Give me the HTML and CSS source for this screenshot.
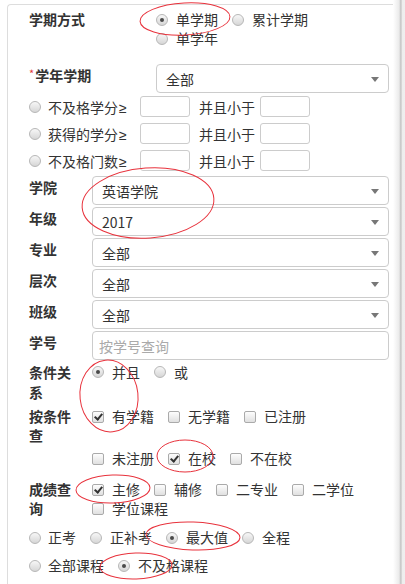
FILE: index.html
```html
<!DOCTYPE html>
<html lang="zh-CN">
<head>
    <meta charset="UTF-8">
    <meta name="viewport" content="width=device-width, initial-scale=1.0">
    <title>成绩查询</title>
    <link rel="stylesheet" href="styles.css">
</head>
<body>
<div class="page">
    <div class="panel">

        <div class="row">
            <div class="lbl wide">学期方式</div>
            <div class="opts first">
                <span class="opt"><i class="rd on"></i>单学期</span>
                <span class="opt"><i class="rd"></i>累计学期</span>
                <span class="opt"><i class="rd"></i>单学年</span>
            </div>
        </div>

        <div class="row term">
            <div class="lbl wide"><span class="req">*</span>学年学期</div>
            <div class="sel"><span>全部</span><i class="caret"></i></div>
        </div>

        <div class="row cr">
            <i class="rd"></i><span class="t">不及格学分<span class="ge">≥</span></span>
            <input type="text" class="num">
            <span class="and">并且小于</span>
            <input type="text" class="num">
        </div>
        <div class="row cr">
            <i class="rd"></i><span class="t">获得的学分<span class="ge">≥</span></span>
            <input type="text" class="num">
            <span class="and">并且小于</span>
            <input type="text" class="num">
        </div>
        <div class="row cr">
            <i class="rd"></i><span class="t">不及格门数<span class="ge">≥</span></span>
            <input type="text" class="num">
            <span class="and">并且小于</span>
            <input type="text" class="num">
        </div>

        <div class="row s">
            <div class="lbl">学院</div>
            <div class="sel"><span>英语学院</span><i class="caret"></i></div>
        </div>
        <div class="row s">
            <div class="lbl">年级</div>
            <div class="sel"><span>2017</span><i class="caret"></i></div>
        </div>
        <div class="row s">
            <div class="lbl">专业</div>
            <div class="sel"><span>全部</span><i class="caret"></i></div>
        </div>
        <div class="row s">
            <div class="lbl">层次</div>
            <div class="sel"><span>全部</span><i class="caret"></i></div>
        </div>
        <div class="row s">
            <div class="lbl">班级</div>
            <div class="sel"><span>全部</span><i class="caret"></i></div>
        </div>
        <div class="row s">
            <div class="lbl">学号</div>
            <input type="text" class="box" placeholder="按学号查询">
        </div>

        <div class="row rel">
            <div class="lbl">条件关系</div>
            <div class="opts">
                <span class="opt"><i class="rd on"></i>并且</span>
                <span class="opt"><i class="rd"></i>或</span>
            </div>
        </div>

        <div class="row cond">
            <div class="lbl">按条件查</div>
            <div class="opts">
                <span class="opt"><i class="cb on"></i>有学籍</span>
                <span class="opt"><i class="cb"></i>无学籍</span>
                <span class="opt"><i class="cb"></i>已注册</span>
            </div>
        </div>
        <div class="row cond2">
            <div class="lbl"></div>
            <div class="opts">
                <span class="opt"><i class="cb"></i>未注册</span>
                <span class="opt"><i class="cb on"></i>在校</span>
                <span class="opt"><i class="cb"></i>不在校</span>
            </div>
        </div>

        <div class="row score">
            <div class="lbl">成绩查询</div>
            <div class="opts">
                <span class="opt"><i class="cb on"></i>主修</span>
                <span class="opt"><i class="cb"></i>辅修</span>
                <span class="opt"><i class="cb"></i>二专业</span>
                <span class="opt"><i class="cb"></i>二学位</span>
                <span class="opt"><i class="cb"></i>学位课程</span>
            </div>
        </div>

        <div class="row line exam">
            <span class="opt"><i class="rd"></i>正考</span>
            <span class="opt"><i class="rd"></i>正补考</span>
            <span class="opt"><i class="rd on"></i>最大值</span>
            <span class="opt"><i class="rd"></i>全程</span>
        </div>
        <div class="row line course">
            <span class="opt"><i class="rd"></i>全部课程</span>
            <span class="opt"><i class="rd on"></i>不及格课程</span>
        </div>

    </div>
    <div class="rail"></div>
</div>

<!-- red hand-drawn marks over the form -->
<svg class="marks" width="405" height="584" viewBox="0 0 405 584">
    <ellipse cx="185" cy="19" rx="45" ry="16" transform="rotate(-3 185 19)"/>
    <ellipse cx="148" cy="203" rx="66" ry="35" transform="rotate(-4 148 203)"/>
    <ellipse cx="109" cy="396" rx="29" ry="36" transform="rotate(-6 109 396)"/>
    <ellipse cx="185" cy="456" rx="28" ry="16"/>
    <ellipse cx="113" cy="489" rx="37" ry="14" transform="rotate(-2 113 489)"/>
    <ellipse cx="193" cy="536" rx="47" ry="14" transform="rotate(2 193 536)"/>
    <ellipse cx="136" cy="566" rx="36" ry="13" transform="rotate(-2 136 566)"/>
</svg>
</body>
</html>
```

FILE: styles.css
```css
body {
    margin: 0;
    font-family: "Noto Sans CJK SC", "Liberation Sans", sans-serif;
    font-size: 14px;
    color: #333;
    background: #fff;
}
.page {
    display: flex;
    height: 584px;
    overflow: hidden;
}
.panel {
    width: 360px;
    margin: 4px 0 0 7px;
    padding: 5px 4px 0 21px;
    border-top: 1px solid #ddd;
    border-left: 1px solid #ddd;
    border-top-left-radius: 4px;
}
.rail {
    flex: 1;
    background: linear-gradient(to right, #fff 0, #ebebeb 6px, #d8d8d8 7px, #bdbdbd 8px, #ededed 9px, #efefef 100%);
}

.row {
    display: flex;
    align-items: flex-start;
}
.lbl {
    flex: none;
    width: 48px;
    margin-right: 15px;
    font-weight: bold;
    line-height: 19px;
}
.lbl.wide {
    width: 127px;
    margin-right: 0;
}
.req {
    color: #e4393c;
    font-size: 11px;
    font-weight: normal;
    vertical-align: 3px;
    margin-right: 1px;
}

.opts {
    display: flex;
    flex-wrap: wrap;
    flex: 1;
    line-height: 19px;
}
.opts.first {
    flex: none;
    width: 170px;
}
.opt {
    display: inline-flex;
    align-items: center;
    gap: 8px;
    margin-right: 14px;
    white-space: nowrap;
}

/* radio + checkbox */
.rd, .cb {
    position: relative;
    flex: none;
    width: 12px;
    height: 12px;
    box-sizing: border-box;
    border: 1px solid #b7b7b7;
    background: linear-gradient(#f7f7f7, #d6d6d6);
}
.rd {
    border-radius: 50%;
}
.rd.on::after {
    content: "";
    position: absolute;
    left: 3px;
    top: 3px;
    width: 4px;
    height: 4px;
    border-radius: 50%;
    background: #4a4a4a;
}
.cb {
    border-radius: 2px;
    border-color: #aaa;
    background: linear-gradient(#fdfdfd, #e0e0e0);
}
.cb.on::after {
    content: "";
    position: absolute;
    left: 3px;
    top: 0;
    width: 3px;
    height: 6px;
    border-right: 2px solid #333;
    border-bottom: 2px solid #333;
    transform: rotate(40deg);
}

/* selects */
.sel {
    flex: 1;
    display: flex;
    align-items: center;
    justify-content: space-between;
    height: 29px;
    box-sizing: border-box;
    padding: 0 9px;
    border: 1px solid #ccc;
    border-radius: 4px;
    background: #fff;
}
.caret {
    width: 0;
    height: 0;
    border-left: 4px solid transparent;
    border-right: 4px solid transparent;
    border-top: 5px solid #777;
    margin-top: 2px;
}
.box {
    flex: 1;
    height: 29px;
    box-sizing: border-box;
    padding: 0 6px;
    border: 1px solid #ccc;
    border-radius: 4px;
    font-family: inherit;
    font-size: 14px;
    color: #333;
}
.box::placeholder {
    color: #aaa;
}

.term {
    margin-top: 16px;
}

/* credit rows */
.cr {
    height: 27px;
    align-items: center;
}
.cr .t {
    width: 92px;
    margin-left: 7px;
}
.ge {
    font-family: "Liberation Sans", sans-serif;
    margin-left: 1px;
}
.num {
    width: 50px;
    height: 21px;
    box-sizing: border-box;
    border: 1px solid #ccc;
    border-radius: 3px;
    padding: 0 4px;
}
.and {
    margin-left: 9px;
    width: 61px;
}

.s {
    margin-top: 2px;
}
.s .lbl {
    padding-top: 2px;
}

.rel {
    margin-top: 2px;
}
.rel .lbl, .rel .opts {
    line-height: 20px;
}
.cond {
    margin-top: 5px;
}
.cond2 {
    margin-top: 4px;
}
.score {
    margin-top: 12px;
}
.line {
    line-height: 19px;
}
.line .opt:first-child {
    gap: 7px;
}
.exam {
    margin-top: 10px;
}
.course {
    margin-top: 9px;
}

.marks {
    position: absolute;
    left: 0;
    top: 0;
    pointer-events: none;
}
.marks ellipse {
    fill: none;
    stroke: #e8323c;
    stroke-width: 1;
}
```
